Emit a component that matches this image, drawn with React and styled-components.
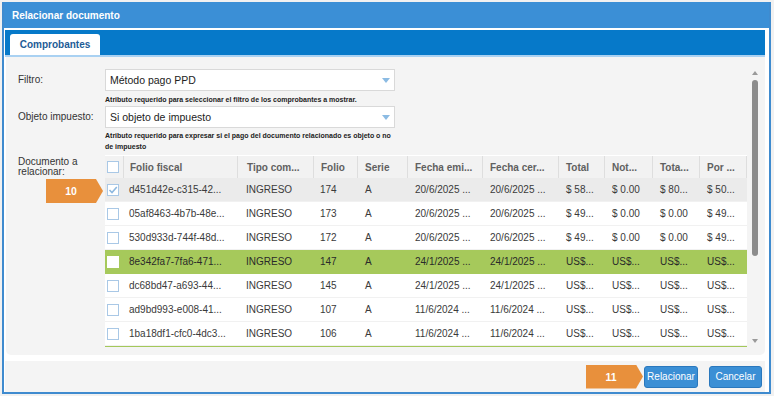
import styled, { createGlobalStyle } from 'styled-components';

const GlobalStyle = createGlobalStyle`
  body {
    margin: 0;
    background: #fff;
    font-family: "Liberation Sans", Arial, sans-serif;
  }
`;

const COLUMNS = [
  { title: 'Folio fiscal', width: 114, pad: 6 },
  { title: 'Tipo com...', width: 76, pad: 9 },
  { title: 'Folio', width: 44 },
  { title: 'Serie', width: 50 },
  { title: 'Fecha emi...', width: 75 },
  { title: 'Fecha cer...', width: 76 },
  { title: 'Total', width: 46 },
  { title: 'Not...', width: 48 },
  { title: 'Tota...', width: 47 },
  { title: 'Por ...', width: 48 },
];

const GRID = `18px ${COLUMNS.map((c) => `${c.width}px`).join(' ')}`;

const ROWS = [
  { id: 'd451d42e-c315-42...', folio: '174', fecha: '20/6/2025 ...', money: ['$ 58...', '$ 0.00', '$ 80...', '$ 50...'], variant: 'selected', checked: true },
  { id: '05af8463-4b7b-48e...', folio: '173', fecha: '20/6/2025 ...', money: ['$ 49...', '$ 0.00', '$ 0.00', '$ 49...'] },
  { id: '530d933d-744f-48d...', folio: '172', fecha: '20/6/2025 ...', money: ['$ 49...', '$ 0.00', '$ 0.00', '$ 49...'] },
  { id: '8e342fa7-7fa6-471...', folio: '147', fecha: '24/1/2025 ...', money: ['US$...', 'US$...', 'US$...', 'US$...'], variant: 'highlight' },
  { id: 'dc68bd47-a693-44...', folio: '145', fecha: '24/1/2025 ...', money: ['US$...', 'US$...', 'US$...', 'US$...'] },
  { id: 'ad9bd993-e008-41...', folio: '107', fecha: '11/6/2024 ...', money: ['US$...', 'US$...', 'US$...', 'US$...'] },
  { id: '1ba18df1-cfc0-4dc3...', folio: '106', fecha: '11/6/2024 ...', money: ['US$...', 'US$...', 'US$...', 'US$...'] },
];

const Page = styled.div`
  width: 774px;
  height: 396px;
  overflow: hidden;
  box-sizing: border-box;
  padding: 2px 0 0 2px;
  background: #f1f1f1;
`;

const Dialog = styled.div`
  width: 769px;
  height: 392px;
  box-sizing: border-box;
  display: flex;
  flex-direction: column;
  background: #fff;
  border: 2px solid #3f8bcf;
  border-top: 0;
`;

const TitleBar = styled.div`
  height: 26px;
  flex: none;
  display: flex;
  align-items: center;
  padding-left: 8px;
  background: #3b8fd6;
  color: #fff;
  font-size: 10px;
  font-weight: bold;
`;

const Body = styled.div`
  display: flex;
  flex-direction: column;
  padding: 2px 4px 0 1px;
`;

const TabStrip = styled.div`
  height: 25px;
  display: flex;
  align-items: flex-end;
  padding-left: 5px;
  background: #0679c9;
  border-bottom: 2px solid #a9d1f2;
`;

const Tab = styled.div`
  width: 90px;
  height: 21px;
  display: flex;
  align-items: center;
  justify-content: center;
  background: #fff;
  border-radius: 3px 3px 0 0;
  color: #1d5c96;
  font-size: 10px;
  font-weight: bold;
`;

const Panel = styled.div`
  height: 298px;
  box-sizing: border-box;
  display: flex;
  margin-left: 1px;
  padding: 12px 6px 0 12px;
  background: #f4f4f4;
  border-radius: 0 0 5px 5px;
`;

const FormGrid = styled.div`
  width: 730px;
  display: grid;
  grid-template-columns: 87px 643px;
  align-content: start;
`;

const FieldLabel = styled.div`
  position: relative;
  align-self: ${({ $top }) => ($top ? 'start' : 'center')};
  padding-top: ${({ $top }) => ($top ? '5px' : '0')};
  color: #333;
  font-size: 10px;
  line-height: ${({ $top }) => ($top ? '10px' : '12px')};
`;

const Select = styled.div`
  width: 290px;
  height: 22px;
  box-sizing: border-box;
  display: flex;
  align-items: center;
  justify-content: space-between;
  margin-top: ${({ $gap }) => $gap || 0}px;
  padding: 0 4px 0 4px;
  background: #fff;
  border: 1px solid #d9d9d9;
  color: #222;
  font-size: 10.5px;
`;

const SelectArrow = styled.span`
  width: 0;
  height: 0;
  border-left: 4px solid transparent;
  border-right: 4px solid transparent;
  border-top: 5px solid #8bbbe3;
`;

const Hint = styled.div`
  grid-column: 2;
  margin-top: ${({ $gap }) => $gap || 0}px;
  color: #222;
  font-size: 7px;
  font-weight: bold;
  line-height: 11px;
  white-space: nowrap;
`;

const Table = styled.div`
  margin-top: 3px;
  width: 642px;
  border-bottom: 1px solid #a4c85a;
`;

const HeaderRow = styled.div`
  display: grid;
  grid-template-columns: ${GRID};
  height: 23px;
  background: #f2f2f2;
  border-top: 1px solid #fff;
  box-sizing: border-box;
`;

const HeadCell = styled.div`
  display: flex;
  align-items: center;
  padding-left: ${({ $pad }) => $pad || 7}px;
  border-left: 1px solid #dedede;
  color: #606060;
  font-size: 10px;
  font-weight: bold;
  white-space: nowrap;
  overflow: hidden;

  &:last-child {
    border-right: 1px solid #dedede;
  }
`;

const rowBackground = {
  selected: '#ebebeb',
  highlight: '#a6c95b',
};

const Row = styled.div`
  display: grid;
  grid-template-columns: ${GRID};
  height: 24px;
  box-sizing: border-box;
  background: ${({ $variant }) => rowBackground[$variant] || '#fff'};
  border-bottom: 1px solid ${({ $variant }) => ($variant === 'highlight' ? '#a6c95b' : '#f1f1f1')};
  color: ${({ $variant }) => ($variant === 'highlight' ? '#2a2a2a' : '#3a3a3a')};
`;

const Cell = styled.div`
  display: flex;
  align-items: center;
  padding-left: ${({ $pad }) => $pad || 8}px;
  font-size: 10px;
  white-space: nowrap;
  overflow: hidden;
`;

const CheckCell = styled.div`
  display: flex;
  align-items: center;
  padding-left: 2px;
`;

const Checkbox = styled.span`
  width: 12px;
  height: 12px;
  box-sizing: border-box;
  display: flex;
  align-items: center;
  justify-content: center;
  background: #fff;
  border: 1px solid ${({ $plain }) => ($plain ? '#fff' : '#a9c8e6')};
`;

const Scrollbar = styled.div`
  width: 8px;
  height: 272px;
  margin: 2px 0 0 3px;
  display: flex;
  flex-direction: column;
  align-items: center;
`;

const ScrollArrow = styled.span`
  width: 0;
  height: 0;
  border-left: 3px solid transparent;
  border-right: 3px solid transparent;
  ${({ $down }) => ($down ? 'border-top: 4px solid #9a9a9a;' : 'border-bottom: 4px solid #9a9a9a;')}
  margin-top: ${({ $down }) => ($down ? 'auto' : '0')};
`;

const ScrollThumb = styled.span`
  width: 6px;
  height: 176px;
  margin-top: 5px;
  background: #8c8c8c;
  border-radius: 3px;
`;

const StepBadge = styled.div`
  width: 57px;
  height: 24px;
  box-sizing: border-box;
  display: flex;
  align-items: center;
  justify-content: center;
  padding-right: 7px;
  background: #e8903c;
  color: #fff;
  font-size: 10.5px;
  font-weight: bold;
  clip-path: polygon(0 0, calc(100% - 7px) 0, 100% 50%, calc(100% - 7px) 100%, 0 100%);
`;

const FloatingBadge = styled(StepBadge)`
  position: absolute;
  left: 28px;
  top: 27px;
`;

const Footer = styled.div`
  height: 31px;
  margin-top: 6px;
  display: flex;
  align-items: center;
  justify-content: flex-end;
  gap: 1px;
  padding-right: 3px;
  background: #f4f4f4;
`;

const ButtonGroup = styled.div`
  display: flex;
  align-items: center;
  gap: 11px;
`;

const Button = styled.button`
  width: ${({ $width }) => $width}px;
  height: 22px;
  padding: 0;
  background: #3b8fd5;
  border: 1px solid #2a78bd;
  border-radius: 3px;
  color: #fff;
  font-family: inherit;
  font-size: 10px;
`;

function Check() {
  return (
    <svg width="10" height="10" viewBox="0 0 10 10">
      <path d="M1.5 5 L4 7.5 L8.8 2" fill="none" stroke="#8db8df" strokeWidth="1.6" />
    </svg>
  );
}

function DocumentRow({ row }) {
  return (
    <Row $variant={row.variant}>
      <CheckCell>
        <Checkbox $plain={row.variant === 'highlight'}>{row.checked && <Check />}</Checkbox>
      </CheckCell>
      <Cell $pad={6}>{row.id}</Cell>
      <Cell $pad={9}>INGRESO</Cell>
      <Cell $pad={7}>{row.folio}</Cell>
      <Cell>A</Cell>
      <Cell>{row.fecha}</Cell>
      <Cell>{row.fecha}</Cell>
      {row.money.map((value, i) => (
        <Cell key={i}>{value}</Cell>
      ))}
    </Row>
  );
}

export default function App() {
  return (
    <>
      <GlobalStyle />
      <Page>
        <Dialog>
          <TitleBar>Relacionar documento</TitleBar>
          <Body>
            <TabStrip>
              <Tab>Comprobantes</Tab>
            </TabStrip>

            <Panel>
              <FormGrid>
                <FieldLabel>Filtro:</FieldLabel>
                <Select>
                  Método pago PPD
                  <SelectArrow />
                </Select>
                <Hint $gap={3}>Atributo requerido para seleccionar el filtro de los comprobantes a mostrar.</Hint>

                <FieldLabel>Objeto impuesto:</FieldLabel>
                <Select $gap={1}>
                  Si objeto de impuesto
                  <SelectArrow />
                </Select>
                <Hint $gap={2}>
                  Atributo requerido para expresar si el pago del documento relacionado es objeto o no
                  <br />
                  de impuesto
                </Hint>

                <FieldLabel $top>
                  Documento a
                  <br />
                  relacionar:
                  <FloatingBadge>10</FloatingBadge>
                </FieldLabel>
                <Table>
                  <HeaderRow>
                    <CheckCell>
                      <Checkbox />
                    </CheckCell>
                    {COLUMNS.map((col) => (
                      <HeadCell key={col.title} $pad={col.pad}>
                        {col.title}
                      </HeadCell>
                    ))}
                  </HeaderRow>
                  {ROWS.map((row) => (
                    <DocumentRow key={row.id} row={row} />
                  ))}
                </Table>
              </FormGrid>

              <Scrollbar>
                <ScrollArrow />
                <ScrollThumb />
                <ScrollArrow $down />
              </Scrollbar>
            </Panel>

            <Footer>
              <StepBadge>11</StepBadge>
              <ButtonGroup>
                <Button $width={54}>Relacionar</Button>
                <Button $width={53}>Cancelar</Button>
              </ButtonGroup>
            </Footer>
          </Body>
        </Dialog>
      </Page>
    </>
  );
}
